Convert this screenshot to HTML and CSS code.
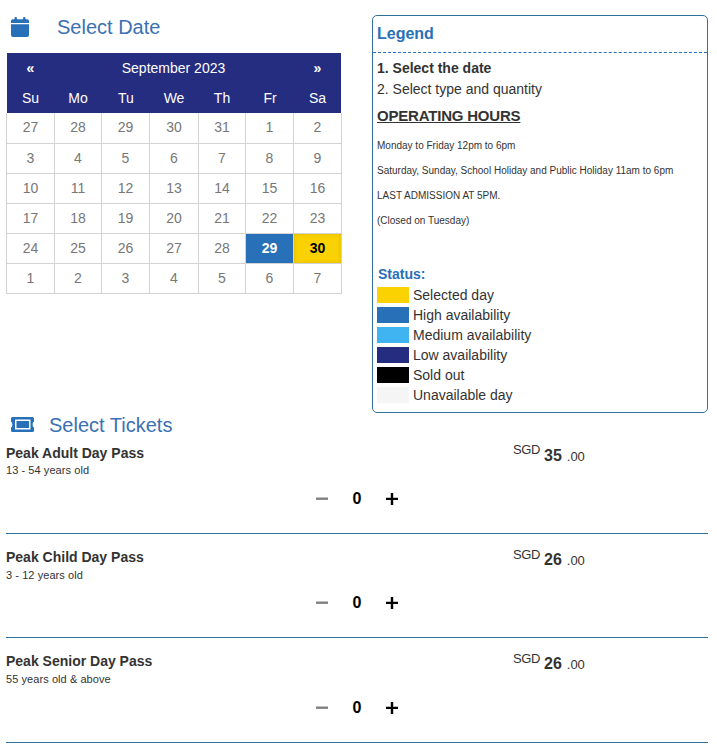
FILE: index.html
```
<!DOCTYPE html>
<html lang="en">
<head>
  <meta charset="UTF-8" />
  <meta name="viewport" content="width=device-width, initial-scale=1.0"/>
  <title>Select Date and Tickets</title>
  <link rel="stylesheet" href="styles.css">
</head>
<body>
  <div class="top">
    <div class="date-section">
      <h2 class="section-title">
        <svg class="icon-calendar" width="18" height="20" viewBox="0 0 18 20"><path d="M0 6V4q0-1.800 1.800-1.800H3.500V.8Q3.500 0 4.700 0t1.200.8v1.400h6.200V.8q0-.8 1.200-.8t1.200.8v1.400h1.700Q18 2.200 18 4v2zM0 7.200h18V18q0 2-2 2H2q-2 0-2-2z"/></svg>
        Select Date
      </h2>

      <div class="calendar">
        <div class="cal-head">
          <b>«</b><span class="month">September 2023</span><b>»</b>
          <span>Su</span><span>Mo</span><span>Tu</span><span>We</span><span>Th</span><span>Fr</span><span>Sa</span>
        </div>
        <div class="cal-days">
          <span>27</span><span>28</span><span>29</span><span>30</span><span>31</span><span>1</span><span>2</span>
          <span>3</span><span>4</span><span>5</span><span>6</span><span>7</span><span>8</span><span>9</span>
          <span>10</span><span>11</span><span>12</span><span>13</span><span>14</span><span>15</span><span>16</span>
          <span>17</span><span>18</span><span>19</span><span>20</span><span>21</span><span>22</span><span>23</span>
          <span>24</span><span>25</span><span>26</span><span>27</span><span>28</span><span class="high">29</span><span class="selected">30</span>
          <span>1</span><span>2</span><span>3</span><span>4</span><span>5</span><span>6</span><span>7</span>
        </div>
      </div>
    </div>

    <div class="legend">
      <h3>Legend</h3>
      <div class="legend-body">
        <div class="step"><b>1. Select the date</b></div>
        <div class="step">2. Select type and quantity</div>
        <h4>OPERATING HOURS</h4>
        <p>Monday to Friday 12pm to 6pm</p>
        <p>Saturday, Sunday, School Holiday and Public Holiday 11am to 6pm</p>
        <p>LAST ADMISSION AT 5PM.</p>
        <p>(Closed on Tuesday)</p>
        <h5>Status:</h5>
        <ul>
          <li><i class="c-selected"></i>Selected day</li>
          <li><i class="c-high"></i>High availability</li>
          <li><i class="c-medium"></i>Medium availability</li>
          <li><i class="c-low"></i>Low availability</li>
          <li><i class="c-sold"></i>Sold out</li>
          <li><i class="c-none"></i>Unavailable day</li>
        </ul>
      </div>
    </div>
  </div>

  <h2 class="section-title tickets-title">
    <svg class="icon-ticket" width="23" height="15" viewBox="0 0 23 15"><path fill-rule="evenodd" d="M1.500 0h20Q23 0 23 1.500v3.300q-1.400 0-1.400 2.700t1.400 2.700v3.300q0 1.500-1.500 1.500h-20Q0 15 0 13.500v-3.300q1.400 0 1.400-2.700T0 4.800V1.500Q0 0 1.500 0zM4 2.500v10h15.500v-10zM5.500 4h12.500v7H5.500z"/></svg>
    Select Tickets
  </h2>

  <div class="ticket">
    <div class="info"><h3>Peak Adult Day Pass</h3><small>13 - 54 years old</small></div>
    <div class="qty">
      <svg class="minus" width="12" height="12" viewBox="0 0 12 12"><path d="M0 4.500h12v2.400H0z"/></svg>
      <b>0</b>
      <svg width="12" height="12" viewBox="0 0 12 12"><path d="M0 4.700h4.800V0h2.400v4.700H12v2.400H7.200V12H4.800V7.100H0z"/></svg>
    </div>
    <div class="price"><span class="cur">SGD</span><b>35</b><span class="cents">.00</span></div>
  </div>

  <div class="ticket">
    <div class="info"><h3>Peak Child Day Pass</h3><small>3 - 12 years old</small></div>
    <div class="qty">
      <svg class="minus" width="12" height="12" viewBox="0 0 12 12"><path d="M0 4.500h12v2.400H0z"/></svg>
      <b>0</b>
      <svg width="12" height="12" viewBox="0 0 12 12"><path d="M0 4.700h4.800V0h2.400v4.700H12v2.400H7.200V12H4.800V7.100H0z"/></svg>
    </div>
    <div class="price"><span class="cur">SGD</span><b>26</b><span class="cents">.00</span></div>
  </div>

  <div class="ticket last">
    <div class="info"><h3>Peak Senior Day Pass</h3><small>55 years old &amp; above</small></div>
    <div class="qty">
      <svg class="minus" width="12" height="12" viewBox="0 0 12 12"><path d="M0 4.500h12v2.400H0z"/></svg>
      <b>0</b>
      <svg width="12" height="12" viewBox="0 0 12 12"><path d="M0 4.700h4.800V0h2.400v4.700H12v2.400H7.200V12H4.800V7.100H0z"/></svg>
    </div>
    <div class="price"><span class="cur">SGD</span><b>26</b><span class="cents">.00</span></div>
  </div>
</body>
</html>
```
FILE: styles.css
```
:root {
  --blue: #2870b8;
  --navy: #252d81;
  --line: #31719b;
  --yellow: #fad201;
  --text: #333;
}

* {
  box-sizing: border-box;
  margin: 0;
  padding: 0;
}

body {
  font-family: "Liberation Sans", Arial, sans-serif;
  font-size: 14px;
  line-height: 20px;
  color: var(--text);
  background: #fff;
  padding: 15px 9px 0 6px;
}

.top {
  display: flex;
  justify-content: space-between;
}

.section-title {
  display: flex;
  align-items: center;
  height: 24px;
  font-size: 20px;
  font-weight: normal;
  color: #3b70b3;
}

.section-title svg {
  fill: var(--blue);
}

.icon-calendar {
  margin: 0 28px 1px 5px;
}

.icon-ticket {
  margin: 0 15px 1px 5px;
}

/* calendar */
.calendar {
  width: 336px;
  margin-top: 14px;
}

.cal-head,
.cal-days {
  display: grid;
  grid-template-columns: 48px 47px 48px 49px 47px 48px 48px;
  text-align: center;
}

.cal-head {
  width: 334px;
  margin-left: 1px;
  grid-template-columns: 47px 48px 48px 48px 48px 48px 47px;
  grid-auto-rows: 30px;
  line-height: 30px;
  background: var(--navy);
  color: #fff;
}

.cal-head .month {
  grid-column: span 5;
  padding-right: 1px;
}

.cal-days {
  border-left: 1px solid #d3d3d3;
  grid-template-rows: 31px;
  grid-auto-rows: 30px;
  line-height: 29px;
  color: #777;
}

.cal-days span {
  border-right: 1px solid #d3d3d3;
  border-bottom: 1px solid #d3d3d3;
}

.cal-days .high,
.cal-days .selected {
  font-weight: bold;
}

.cal-days .high {
  background: var(--blue);
  color: #fff;
}

.cal-days .selected {
  background: var(--yellow);
  color: #000;
  box-shadow: inset 0 0 4px rgba(0, 0, 0, 0.12);
}

/* legend */
.legend {
  width: 336px;
  height: 398px;
  border: 1px solid var(--line);
  border-radius: 5px;
}

.legend h3 {
  height: 37px;
  padding-left: 4px;
  border-bottom: 1px dashed var(--blue);
  font-size: 16px;
  line-height: 35px;
  color: var(--blue);
}

.legend-body {
  padding: 5px 4px 0;
}

.step {
  height: 21px;
}

.legend h4 {
  height: 31px;
  margin-bottom: 2px;
  font-size: 15px;
  letter-spacing: -0.2px;
  line-height: 31px;
  text-decoration: underline;
}

.legend p {
  height: 25px;
  font-size: 10px;
  line-height: 25px;
}

.legend h5 {
  margin-top: 31px;
  padding-left: 1px;
  font-size: 14px;
  line-height: 20px;
  color: var(--blue);
}

.legend ul {
  list-style: none;
  margin-top: 1px;
}

.legend li {
  display: flex;
  align-items: center;
  height: 20px;
}

.legend li i {
  width: 32px;
  height: 16px;
  margin-right: 4px;
}

.c-selected { background: var(--yellow); }
.c-high { background: var(--blue); }
.c-medium { background: #40b4f0; }
.c-low { background: var(--navy); }
.c-sold { background: #000; }
.c-none { background: #f5f5f5; }

/* tickets */
.ticket {
  display: grid;
  grid-template-columns: 310px 197px 1fr;
  height: 104px;
  padding-top: 13px;
  border-bottom: 1px solid var(--line);
}

.tickets-title + .ticket {
  height: 97px;
  padding-top: 6px;
}

.ticket.last {
  height: 105px;
}

.info h3 {
  font-size: 14px;
  line-height: 20px;
}

.info small {
  display: block;
  font-size: 11px;
  line-height: 15px;
  letter-spacing: 0.07px;
}

.ticket + .ticket small {
  margin-top: 1px;
}

.qty {
  display: flex;
  align-items: center;
  height: 20px;
  margin-top: 46px;
  color: #000;
  font-size: 16px;
}

.last .qty {
  margin-top: 47px;
}

.qty b {
  width: 58px;
  text-align: center;
}

.qty .minus {
  fill: #808080;
}

.price {
  display: flex;
  align-items: flex-start;
}

.price b {
  margin: 3px 5px 0 4px;
  font-size: 16px;
}

.cur {
  margin-top: -3px;
  font-size: 13px;
  letter-spacing: -0.4px;
}

.ticket + .ticket .cur {
  margin-top: -2px;
}

.cents {
  margin-top: 4px;
  font-size: 13px;
}
```
